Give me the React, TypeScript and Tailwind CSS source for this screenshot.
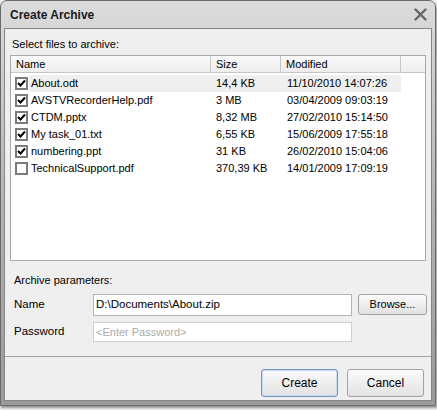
import React from 'react';

interface FileRow {
  name: string;
  size: string;
  modified: string;
  checked: boolean;
}

const files: FileRow[] = [
  { name: 'About.odt', size: '14,4 KB', modified: '11/10/2010 14:07:26', checked: true },
  { name: 'AVSTVRecorderHelp.pdf', size: '3 MB', modified: '03/04/2009 09:03:19', checked: true },
  { name: 'CTDM.pptx', size: '8,32 MB', modified: '27/02/2010 15:14:50', checked: true },
  { name: 'My task_01.txt', size: '6,55 KB', modified: '15/06/2009 17:55:18', checked: true },
  { name: 'numbering.ppt', size: '31 KB', modified: '26/02/2010 15:04:06', checked: true },
  { name: 'TechnicalSupport.pdf', size: '370,39 KB', modified: '14/01/2009 17:09:19', checked: false },
];

const CheckBox = ({ checked }: { checked: boolean }) => (
  <div className="w-[13px] h-[13px] border-2 border-[#7c7c7c] bg-white flex items-center justify-center shrink-0">
    {checked && (
      <svg width="9" height="9" viewBox="0 0 9 9">
        <path d="M1 4 L3.5 6.5 L8 1.5" fill="none" stroke="#000" strokeWidth="2" />
      </svg>
    )}
  </div>
);

const Button = ({ label, primary, className }: { label: string; primary?: boolean; className?: string }) => (
  <button
    className={`rounded-[3px] border bg-gradient-to-b from-[#fbfbfb] to-[#e2e2e2] text-black ${
      primary ? 'border-[#7a95c0] shadow-[inset_0_0_0_1px_#c8d8ee]' : 'border-[#a2a2a2]'
    } ${className ?? ''}`}
  >
    {label}
  </button>
);

export default function App() {
  return (
    <div
      className="w-[437px] h-[410px] bg-[#ececec] relative"
      style={{ fontFamily: '"Liberation Sans", Arial, sans-serif' }}
    >
      <div className="w-[436px] h-[406px] rounded-t-[7px] border border-[#6a6a6a] bg-gradient-to-b from-[#dcdcdc] via-[#b4b4b4] to-[#9a9a9a] flex flex-col shadow-[1px_2px_2px_rgba(0,0,0,0.35)]">
        {/* title bar */}
        <div className="h-[27px] flex items-center justify-between pl-[9px] pr-[8px] shrink-0">
          <span className="text-[12px] font-bold text-[#1a1a1a]">Create Archive</span>
          <svg width="13" height="13" viewBox="0 0 13 13">
            <path d="M1.5 1.5 L11.5 11.5 M11.5 1.5 L1.5 11.5" stroke="#666" strokeWidth="2.4" strokeLinecap="round" />
          </svg>
        </div>

        {/* body */}
        <div className="flex-1 mx-[3px] mb-[4px] bg-[#efefef] border border-[#858585] flex flex-col text-[11px] text-black">
          <div className="pl-[7px] pt-[7px] h-[26px]">Select files to archive:</div>

          {/* file list */}
          <div className="ml-[5px] w-[416px] h-[206px] bg-white border border-[#a8a8a8] flex flex-col">
            <div className="h-[17px] flex border-b border-[#c6c6c6] bg-gradient-to-b from-[#fafafa] to-[#ededed] shrink-0">
              <div className="w-[200px] pl-[5px] border-r border-[#c6c6c6] flex items-center">Name</div>
              <div className="w-[70px] pl-[5px] border-r border-[#c6c6c6] flex items-center">Size</div>
              <div className="w-[120px] pl-[5px] border-r border-[#c6c6c6] flex items-center">Modified</div>
              <div className="flex-1" />
            </div>
            <div className="pt-[2px]">
              {files.map((f, i) => (
                <div key={f.name} className="h-[17px] flex items-center">
                  <div className="w-[18px] pl-[4px] flex items-center">
                    <CheckBox checked={f.checked} />
                  </div>
                  <div className={`flex w-[372px] h-full items-center ${i === 0 ? 'bg-[#efefef]' : ''}`}>
                    <div className="w-[182px] pl-[2px]">{f.name}</div>
                    <div className="w-[70px] pl-[5px]">{f.size}</div>
                    <div className="w-[120px] pl-[6px]">{f.modified}</div>
                  </div>
                </div>
              ))}
            </div>
          </div>

          <div className="pl-[9px] pt-[11px] h-[33px]">Archive parameters:</div>

          <div className="flex items-center h-[22px] pl-[9px]">
            <div className="w-[79px] text-[11.5px]">Name</div>
            <div className="w-[259px] h-[22px] border border-[#b4b4b4] bg-white flex items-center pl-[2px] text-[11.5px]">
              D:\Documents\About.zip
            </div>
            <Button label="Browse..." className="ml-[6px] w-[69px] h-[21px] text-[11px] self-start" />
          </div>

          <div className="flex items-center h-[20px] pl-[9px] mt-[6px]">
            <div className="w-[79px] text-[11.5px]">Password</div>
            <div className="w-[259px] h-[20px] border border-[#cfcfcf] bg-white flex items-center pl-[2px] text-[#aaaaaa]">
              &lt;Enter Password&gt;
            </div>
          </div>

          <div className="mt-[14px] border-t border-[#a3a3a3]" />

          <div className="flex justify-end gap-[9px] pr-[7px] pt-[12px]">
            <Button label="Create" primary className="w-[77px] h-[28px] text-[12px]" />
            <Button label="Cancel" className="w-[77px] h-[28px] text-[12px]" />
          </div>
        </div>
      </div>
    </div>
  );
}
